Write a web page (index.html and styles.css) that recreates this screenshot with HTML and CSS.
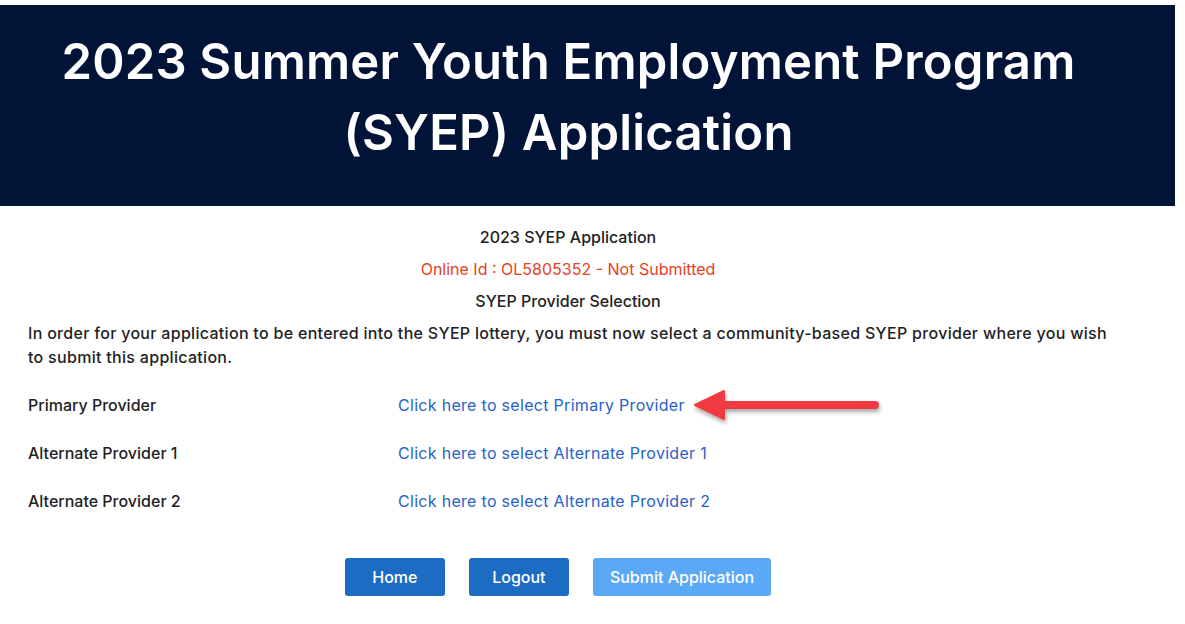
FILE: index.html
```html
<!DOCTYPE html>
<html lang="en">
<head>
    <meta charset="UTF-8">
    <meta name="viewport" content="width=device-width, initial-scale=1.0">
    <title>2023 SYEP Application</title>
    <link rel="stylesheet" href="styles.css">
</head>
<body>
    <header class="banner">
        <h1>2023 Summer Youth Employment Program<br>(SYEP) Application</h1>
    </header>

    <main class="container">
        <div class="center-line">2023 SYEP Application</div>
        <div class="center-line status">Online Id : OL5805352 - Not Submitted</div>
        <div class="center-line">SYEP Provider Selection</div>
        <p class="intro">In order for your application to be entered into the SYEP lottery, you must now select a community-based SYEP provider where you wish to submit this application.</p>

        <div class="providers">
            <div class="provider-row">
                <span class="provider-label">Primary Provider</span>
                <a href="#" class="provider-link">Click here to select Primary Provider</a>
                <svg class="arrow" width="200" height="40" viewBox="0 0 200 40">
                    <defs>
                        <filter id="shadow" x="-10%" y="-30%" width="120%" height="180%">
                            <feDropShadow dx="1" dy="3" stdDeviation="2" flood-color="#000" flood-opacity="0.35"/>
                        </filter>
                    </defs>
                    <g filter="url(#shadow)" fill="#ef3b3f" stroke="#ef3b3f">
                        <line x1="30" y1="19" x2="182" y2="19" stroke-width="8" stroke-linecap="round"/>
                        <polygon points="2,19 31,5 31,33" stroke-width="2" stroke-linejoin="round"/>
                    </g>
                </svg>
            </div>
            <div class="provider-row">
                <span class="provider-label">Alternate Provider 1</span>
                <a href="#" class="provider-link">Click here to select Alternate Provider 1</a>
            </div>
            <div class="provider-row">
                <span class="provider-label">Alternate Provider 2</span>
                <a href="#" class="provider-link">Click here to select Alternate Provider 2</a>
            </div>
        </div>

        <div class="buttons">
            <button type="button" class="btn">Home</button>
            <button type="button" class="btn">Logout</button>
            <button type="button" class="btn btn-light">Submit Application</button>
        </div>
    </main>
</body>
</html>
```

FILE: styles.css
```css
body {
    margin: 0;
    font-family: Inter, "Noto Sans", sans-serif;
    color: #222;
    background-color: white;
}
.banner {
    width: 1175px;
    margin-top: 5px;
    height: 201px;
    box-sizing: border-box;
    padding: 21px 38px 0 0;
    background-color: #011438;
}
.banner h1 {
    margin: 0;
    text-align: center;
    color: white;
    font-size: 49px;
    font-weight: 600;
    line-height: 71px;
    letter-spacing: 0.2px;
}
.container {
    width: 1080px;
    margin-left: 28px;
    padding-top: 15px;
    font-size: 16px;
}
.center-line {
    text-align: center;
    line-height: 32px;
    font-weight: 500;
}
.status {
    color: #e8411e;
    font-weight: 400;
}
.intro {
    margin: 4px 0 0;
    line-height: 24px;
    font-weight: 500;
    letter-spacing: 0.3px;
}
.providers {
    margin-top: 12px;
}
.provider-row {
    display: flex;
    align-items: center;
    height: 48px;
    font-weight: 500;
}
.provider-label {
    width: 370px;
}
.provider-link {
    color: #2861c8;
    text-decoration: none;
    font-weight: 400;
    letter-spacing: 0.3px;
}
.arrow {
    margin-left: 8px;
    margin-top: 2px;
}
.buttons {
    display: flex;
    justify-content: center;
    gap: 24px;
    margin-top: 33px;
    padding-right: 20px;
}
.btn {
    height: 38px;
    min-width: 100px;
    padding: 0 13px;
    border: none;
    border-radius: 3px;
    background-color: #1c6cc3;
    color: white;
    font-family: Inter, "Noto Sans", sans-serif;
    font-size: 16px;
    font-weight: 500;
    cursor: pointer;
}
.btn-light {
    padding: 0 17px;
    background-color: #5ba8f7;
}
```
